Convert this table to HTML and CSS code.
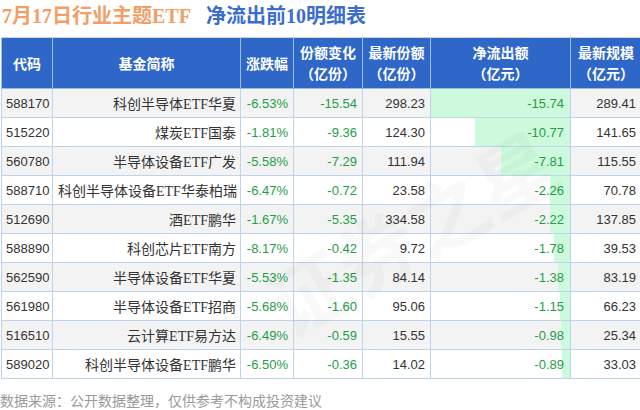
FILE: index.html
```html
<!DOCTYPE html>
<html lang="zh">
<head>
<meta charset="utf-8">
<link rel="stylesheet" href="styles.css">
</head>
<body>
<div class="page">
  <h1 class="title"><span class="t-orange">7月17日行业主题ETF</span><span class="t-blue">净流出前10明细表</span></h1>
  <table class="grid">
    <colgroup>
      <col class="c-code"><col class="c-name"><col class="c-chg"><col class="c-share"><col class="c-latest"><col class="c-flow"><col class="c-scale">
    </colgroup>
    <thead>
      <tr>
        <th>代码</th>
        <th>基金简称</th>
        <th>涨跌幅</th>
        <th>份额变化<br>（亿份）</th>
        <th>最新份额<br>（亿份）</th>
        <th>净流出额<br>（亿元）</th>
        <th>最新规模<br>（亿元）</th>
      </tr>
    </thead>
    <tbody>
      <tr><td class="code">588170</td><td class="name">科创半导体ETF华夏</td><td class="neg">-6.53%</td><td class="neg">-15.54</td><td class="num">298.23</td><td class="neg flow" style="--w:100%">-15.74</td><td class="num">289.41</td></tr>
      <tr><td class="code">515220</td><td class="name">煤炭ETF国泰</td><td class="neg">-1.81%</td><td class="neg">-9.36</td><td class="num">124.30</td><td class="neg flow" style="--w:68.4%">-10.77</td><td class="num">141.65</td></tr>
      <tr><td class="code">560780</td><td class="name">半导体设备ETF广发</td><td class="neg">-5.58%</td><td class="neg">-7.29</td><td class="num">111.94</td><td class="neg flow" style="--w:49.6%">-7.81</td><td class="num">115.55</td></tr>
      <tr><td class="code">588710</td><td class="name">科创半导体设备ETF华泰柏瑞</td><td class="neg">-6.47%</td><td class="neg">-0.72</td><td class="num">23.58</td><td class="neg flow" style="--w:14.4%">-2.26</td><td class="num">70.78</td></tr>
      <tr><td class="code">512690</td><td class="name">酒ETF鹏华</td><td class="neg">-1.67%</td><td class="neg">-5.35</td><td class="num">334.58</td><td class="neg flow" style="--w:14.1%">-2.22</td><td class="num">137.85</td></tr>
      <tr><td class="code">588890</td><td class="name">科创芯片ETF南方</td><td class="neg">-8.17%</td><td class="neg">-0.42</td><td class="num">9.72</td><td class="neg flow" style="--w:11.3%">-1.78</td><td class="num">39.53</td></tr>
      <tr><td class="code">562590</td><td class="name">半导体设备ETF华夏</td><td class="neg">-5.53%</td><td class="neg">-1.35</td><td class="num">84.14</td><td class="neg flow" style="--w:8.8%">-1.38</td><td class="num">83.19</td></tr>
      <tr><td class="code">561980</td><td class="name">半导体设备ETF招商</td><td class="neg">-5.68%</td><td class="neg">-1.60</td><td class="num">95.06</td><td class="neg flow" style="--w:7.3%">-1.15</td><td class="num">66.23</td></tr>
      <tr><td class="code">516510</td><td class="name">云计算ETF易方达</td><td class="neg">-6.49%</td><td class="neg">-0.59</td><td class="num">15.55</td><td class="neg flow" style="--w:6.2%">-0.98</td><td class="num">25.34</td></tr>
      <tr><td class="code">589020</td><td class="name">科创半导体设备ETF鹏华</td><td class="neg">-6.50%</td><td class="neg">-0.36</td><td class="num">14.02</td><td class="neg flow" style="--w:5.7%">-0.89</td><td class="num">33.03</td></tr>
    </tbody>
  </table>
  <p class="source">数据来源：公开数据整理，仅供参考不构成投资建议</p>
  <div class="watermark">证券之星</div>
</div>
</body>
</html>
```

FILE: styles.css
```css
html, body {
  margin: 0;
  padding: 0;
  background: #ffffff;
}
.page {
  position: relative;
  width: 640px;
  height: 410px;
  overflow: hidden;
  font-family: "Liberation Sans", "Noto Sans CJK SC", sans-serif;
}
.title {
  margin: 0;
  height: 37px;
  padding-left: 2px;
  font-family: "Liberation Serif", "Noto Sans CJK SC", serif;
  font-size: 20px;
  font-weight: bold;
  line-height: 33px;
  white-space: nowrap;
  display: flex;
  gap: 15px;
}
.t-orange { color: #f29e66; }
.t-blue { color: #3a6dcc; }
.grid {
  margin-left: 1px;
  width: 640px;
  border-collapse: collapse;
  table-layout: fixed;
  font-size: 13px;
}
.c-code { width: 51px; }
.c-name { width: 188px; }
.c-chg { width: 53px; }
.c-share { width: 69px; }
.c-latest { width: 68px; }
.c-flow { width: 140px; }
.c-scale { width: 71px; }
.grid th {
  height: 50px;
  padding: 0;
  background: #2e67c8;
  color: #ffffff;
  font-family: "Noto Sans CJK SC", sans-serif;
  font-size: 14px;
  font-weight: bold;
  line-height: 21px;
  text-align: center;
  border: 1px solid #9dbbe6;
  border-top: 1px solid #d2d2d2;
}
.grid td {
  height: 28px;
  padding: 0 5px;
  border: 1px solid #bed3ec;
  text-align: right;
  color: #333333;
  white-space: nowrap;
}
.grid tbody tr:nth-child(odd) { background: #f3f3f3; }
.grid tbody tr:nth-child(even) { background: #ffffff; }
.grid td.code { text-align: left; padding-left: 4px; }
.grid td.name {
  font-family: "Liberation Serif", "Noto Sans CJK SC", serif;
  font-size: 14px;
  padding-right: 4px;
}
.grid td.neg { color: #1f9e48; }
.grid td.flow {
  padding-right: 6px;
  background-image: linear-gradient(to left, #cdfadc var(--w), transparent var(--w));
  background-repeat: no-repeat;
}
.source {
  margin: 11px 0 0 0;
  font-family: "Noto Sans CJK SC", sans-serif;
  font-size: 14px;
  line-height: 20px;
  color: #9a9a9a;
}
.watermark {
  position: absolute;
  left: 250px;
  top: 190px;
  pointer-events: none;
  font-family: "Noto Sans CJK SC", sans-serif;
  font-size: 80px;
  font-weight: bold;
  line-height: 1;
  color: rgba(0, 0, 0, 0.025);
  white-space: nowrap;
  transform: rotate(-30deg);
}
```
